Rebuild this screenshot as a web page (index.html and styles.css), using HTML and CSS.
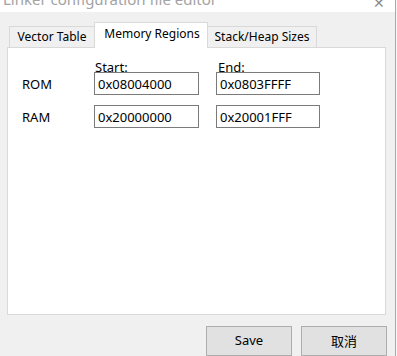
FILE: index.html
```html
<!DOCTYPE html>
<html lang="zh-CN">
<head>
  <meta charset="UTF-8">
  <title>Linker configuration file editor</title>
  <link rel="stylesheet" href="styles.css">
</head>
<body>
  <div class="window">
    <div class="titlebar">
      <span class="title">Linker configuration file editor</span>
      <span class="close">✕</span>
    </div>

    <div class="content">
      <!-- tab strip -->
      <div class="tabs">
        <div class="tab tab-vector">Vector Table</div>
        <div class="tab tab-memory active">Memory Regions</div>
        <div class="tab tab-stack">Stack/Heap Sizes</div>
      </div>

      <div class="panel">
        <div class="regions">
          <div class="row head">
            <span class="row-label"></span>
            <span class="col-label">Start:</span>
            <span class="col-label end">End:</span>
          </div>
          <div class="row">
            <span class="row-label">ROM</span>
            <input type="text" class="field" value="0x08004000">
            <input type="text" class="field end" value="0x0803FFFF">
          </div>
          <div class="row">
            <span class="row-label">RAM</span>
            <input type="text" class="field" value="0x20000000">
            <input type="text" class="field end" value="0x20001FFF">
          </div>
        </div>
      </div>

      <div class="buttons">
        <button class="btn">Save</button>
        <button class="btn">取消</button>
      </div>
    </div>
  </div>
  <div class="edge"></div>
</body>
</html>
```

FILE: styles.css
```css
/* dialog styles */
html, body {
  margin: 0;
  height: 100%;
}

body {
  display: flex;
  background: #f0f0f0;
  font-family: "Noto Sans", "Noto Sans CJK SC", sans-serif;
  font-size: 13px;
  color: #000;
  overflow: hidden;
}

.window {
  width: 395px;
  display: flex;
  flex-direction: column;
}

.edge {
  width: 1px;
  border-left: 1px solid #a9a9a9;
  background: #f7f7f7;
}

.titlebar {
  height: 14px;
  background: #fff;
  position: relative;
  overflow: hidden;
}

.title {
  position: absolute;
  left: 3px;
  top: -11px;
  font-size: 15px;
  color: #a3a3a3;
  white-space: nowrap;
}

.close {
  position: absolute;
  left: 373px;
  top: -7px;
  font-size: 14px;
  color: #8a8a8a;
}

.content {
  flex: 1;
  padding: 10px 9px 0 7px;
  display: flex;
  flex-direction: column;
}

.tabs {
  display: flex;
  align-items: flex-end;
  padding-left: 2px;
  height: 26px;
  position: relative;
  z-index: 1;
  margin-bottom: -1px;
  font-size: 12px;
}

.tab {
  box-sizing: border-box;
  height: 21px;
  line-height: 19px;
  text-align: center;
  border: 1px solid #d9d9d9;
  border-bottom: none;
  background: #f0f0f0;
  margin-bottom: 1px;
}

.tab-vector {
  width: 85px;
  border-right: none;
}

.tab-memory {
  width: 114px;
}

.tab-stack {
  width: 109px;
  border-left: none;
}

.tab.active {
  height: 26px;
  line-height: 21px;
  background: #fff;
  margin-bottom: 0;
  padding-left: 2px;
}

.panel {
  height: 266px;
  background: #fff;
  border: 1px solid #d9d9d9;
}

.regions {
  padding: 13px 0 0 14px;
}

.row {
  display: flex;
  align-items: center;
  height: 23px;
}

.row + .row {
  margin-top: 10px;
}

.row.head {
  height: 11px;
  align-items: flex-start;
}

.row-label {
  width: 72px;
  padding-top: 1px;
}

.col-label {
  width: 105px;
  height: 11px;
  line-height: 12px;
  padding-left: 1px;
}

.row.head + .row {
  margin-top: 0;
}

.end {
  margin-left: 17px;
}

.field {
  box-sizing: border-box;
  width: 105px;
  height: 23px;
  margin-top: 0;
  margin-bottom: 0;
  padding: 0 3px;
  border: 1px solid #7a7a7a;
  font-family: inherit;
  font-size: 13px;
  color: #000;
  background: #fff;
  outline: none;
}

.field.end {
  width: 104px;
}

.buttons {
  display: flex;
  justify-content: flex-end;
  gap: 9px;
  margin-top: 11px;
  margin-right: -1px;
}

.btn {
  width: 86px;
  height: 30px;
  background: #e1e1e1;
  border: 1px solid #adadad;
  font-family: inherit;
  font-size: 13px;
  color: #000;
  padding: 0 0 2px;
}
```
